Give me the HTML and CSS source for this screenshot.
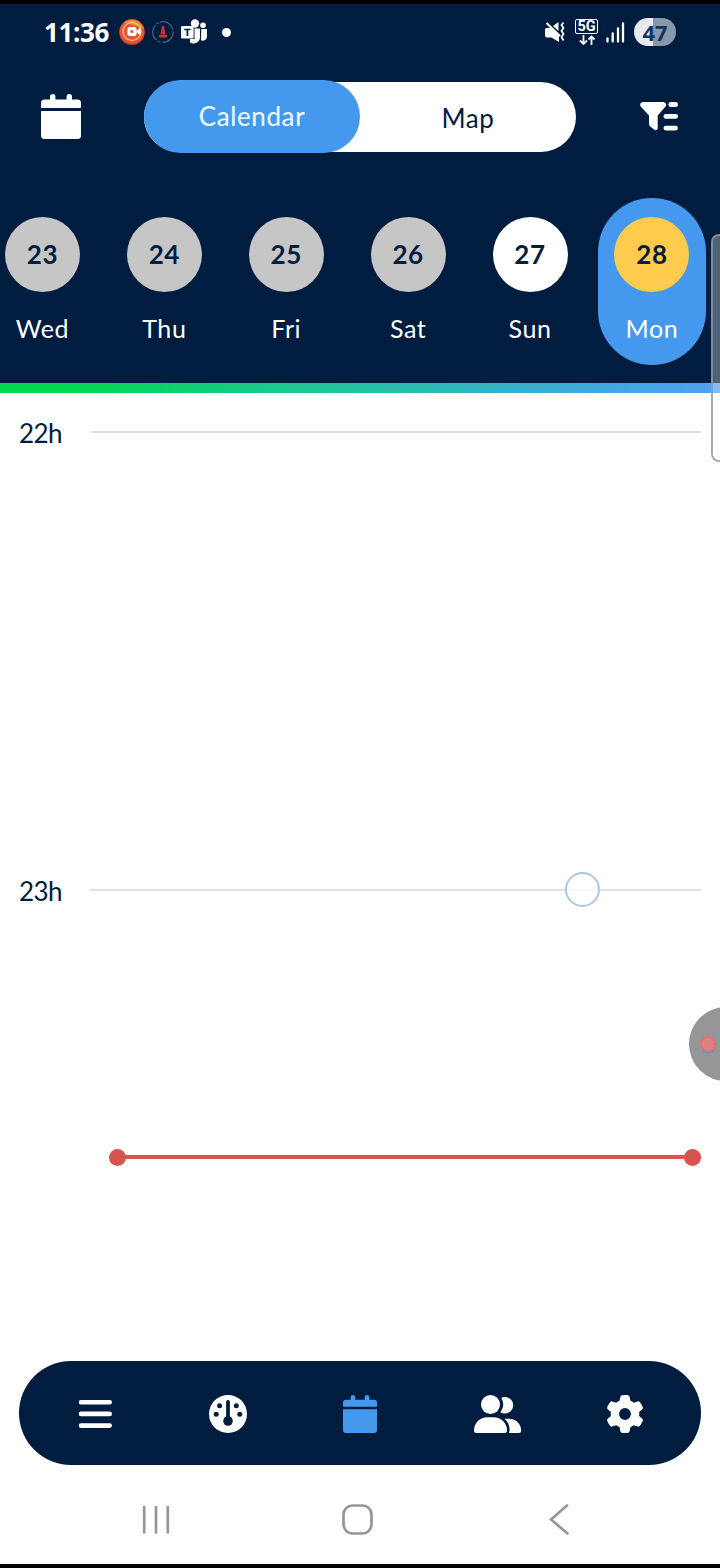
FILE: index.html
```html
<!DOCTYPE html>
<html lang="en">
<head>
<meta charset="utf-8">
<title>Calendar</title>
<link rel="stylesheet" href="styles.css">
</head>
<body>
<div class="screen">
  <header class="header">
    <div class="status">
      <span class="clock">11:36</span>
      <svg class="rec" width="26" height="28" viewBox="0 0 26 28"><circle cx="13" cy="14.5" r="12.8" fill="#a83428"/><circle cx="13" cy="13.5" r="12.5" fill="#e5533c"/><path d="M5 5A12.500 12.500 0 0 1 25 11L19 8Z" fill="#f0923c"/><circle cx="13" cy="13.500" r="9" fill="none" stroke="#f7cf6b" stroke-width="1.200"/><rect x="8.500" y="9" width="9" height="9" rx="2" fill="#fff"/><path d="M17 13L22 9.500V17.500L17 14Z" fill="#fff"/><circle cx="12.800" cy="13.500" r="1.600" fill="#e5533c"/></svg>
      <svg class="ring" width="22" height="24" viewBox="0 0 22 24"><circle cx="11" cy="12" r="10.300" fill="none" stroke="#4d6076" stroke-width="1.200" stroke-dasharray="17 1.500 3 1"/><path d="M10 6H12L13.500 14.500H8.500Z M7 15H15V17.500H7Z" fill="#d3302e"/></svg>
      <svg class="teams" width="27" height="26" viewBox="0 0 27 26"><g fill="#fff"><circle cx="14" cy="4.500" r="4.200"/><circle cx="22" cy="6.200" r="2.800"/><path d="M13.500 9.500H19V18.500A6.500 6.500 0 0 1 9 23.500V20H13.500Z"/><path d="M20.300 10H26V17.500A4.300 4.300 0 0 1 20 21.300Z"/><rect x="0" y="7" width="12.600" height="12.600" rx="1.400"/></g><path d="M3.300 10.500H9.500M6.400 10.500V17" stroke="#001d3f" stroke-width="1.700"/></svg>
      <span class="dot"></span>
      <span class="spacer"></span>
      <svg class="mute" width="20" height="22" viewBox="0 0 20 22"><path d="M0 8.500Q0 7 1.500 7H6L14 14V21L6.500 16.500H2Q0 16.500 0 14.500ZM8 5L13.500 1V10Z" fill="#fff"/><path d="M1.500 2L15 15" stroke="#fff" stroke-width="2"/><path d="M18.500 1.500L16.500 4L18.500 7L16.500 10L18.500 13L16.500 16L18.500 19.500" fill="none" stroke="#fff" stroke-width="1.700"/></svg>
      <div class="network"><span>5G</span><svg width="18" height="10" viewBox="0 0 18 10"><path d="M5.500 0V9M2 5.500L5.500 9L9 5.500M13.500 10V1.500M10.500 4.500L13.500 1.500L16.500 4.500" fill="none" stroke="#fff" stroke-width="1.800"/></svg></div>
      <svg class="signal" width="19" height="21" viewBox="0 0 19 21"><path d="M1.500 16.500V19.500M6.700 11.500V19.500M12 6.500V19.500M17 1.500V19.500" stroke="#fff" stroke-width="2.300" stroke-linecap="round"/></svg>
      <span class="battery">47</span>
    </div>
    <div class="toolbar">
      <svg width="40" height="45" viewBox="0 0 40 45"><path class="white" d="M0 14V9Q0 5.500 3.500 5.500H9V2.700A2.700 2.700 0 0 1 14.400 2.700V5.500H25.600V2.700A2.700 2.700 0 0 1 31 2.700V5.500H36.500Q40 5.500 40 9V14ZM0 17H40V41.500Q40 45 36.500 45H3.500Q0 45 0 41.500Z"/></svg>
      <div class="tabs"><span class="tab active">Calendar</span><span class="tab">Map</span></div>
      <svg width="38" height="29" viewBox="0 0 38 29"><path class="white" d="M2.500 0H23.500Q27.500 1.200 25.500 4.500L17.700 13.500V26.500Q17 28.800 14.800 28L10.500 24.800Q9 23.800 9 22V13.500L.7 4.500Q-1 1.200 2.500 0Z"/><g class="white"><rect x="28.500" y="0" width="9.500" height="5" rx="2.500"/><rect x="23.500" y="12" width="14.500" height="4.800" rx="2.400"/><rect x="23.500" y="23.700" width="14.500" height="4.800" rx="2.400"/></g></svg>
    </div>
    <div class="days">
      <div class="day past"><b>23</b><span>Wed</span></div>
      <div class="day past"><b>24</b><span>Thu</span></div>
      <div class="day past"><b>25</b><span>Fri</span></div>
      <div class="day past"><b>26</b><span>Sat</span></div>
      <div class="day"><b>27</b><span>Sun</span></div>
      <div class="day selected"><b>28</b><span>Mon</span></div>
    </div>
  </header>
  <div class="gradient"></div>
  <main class="timeline">
    <div class="hour"><span>22h</span><i></i></div>
    <div class="hour"><span>23h</span><i></i></div>
    <div class="touch"></div>
    <div class="now"></div>
  </main>
  <nav class="nav">
    <svg width="34" height="38" viewBox="0 0 34 38"><path d="M3 7.300H31.700M3 18.900H31.700M3 30.600H31.700" stroke="#fff" stroke-width="4.600" stroke-linecap="round"/></svg>
    <svg width="38" height="38" viewBox="0 0 38 38"><circle class="white" cx="19" cy="19" r="19"/><g fill="#001d3f"><circle cx="19" cy="26" r="4.800"/><rect x="17.100" y="5" width="3.800" height="20" rx="1.900"/><circle cx="10.600" cy="10.800" r="2.500"/><circle cx="27.300" cy="10.800" r="2.500"/><circle cx="7.200" cy="19.200" r="2.500"/><circle cx="30.800" cy="19.200" r="2.500"/></g></svg>
    <svg width="34" height="38" viewBox="0 0 40 45" preserveAspectRatio="none"><path fill="#4499ee" d="M0 14V9Q0 5.500 3.500 5.500H9V2.700A2.700 2.700 0 0 1 14.400 2.700V5.500H25.600V2.700A2.700 2.700 0 0 1 31 2.700V5.500H36.500Q40 5.500 40 9V14ZM0 17H40V41.500Q40 45 36.500 45H3.500Q0 45 0 41.500Z"/></svg>
    <svg width="48" height="38" viewBox="0 0 48 38"><g class="white"><circle cx="16.500" cy="9.500" r="9.500"/><path d="M27.300 2.700A8.300 8.300 0 1 1 26.400 17.200A13 13 0 0 0 27.300 2.700Z"/><path d="M0 35.500C0 28 6 22.300 13.300 22.300H19.700C27 22.300 33 28 33 35.500Q33 38 30.500 38H2.500Q0 38 0 35.500Z"/><path d="M30.500 23.800H35C42 23.800 47.200 29 47.200 35.700Q47.200 38 44.900 38H34.900Q35.600 36.500 35.600 34.800C35.600 30.300 33.700 26.500 30.500 23.800Z"/></g></svg>
    <svg class="gear" width="38" height="38" viewBox="0 0 512 512"><path class="white" d="M495.9 166.6c3.200 8.700 .5 18.400-6.400 24.600l-43.300 39.400c1.100 8.300 1.700 16.800 1.700 25.400s-.6 17.100-1.700 25.400l43.300 39.400c6.900 6.200 9.600 15.900 6.400 24.600c-4.400 11.900-9.700 23.300-15.800 34.300l-4.700 8.100c-6.600 11-14 21.400-22.100 31.200c-5.900 7.200-15.700 9.600-24.500 6.800l-55.700-17.700c-13.400 10.300-28.200 18.900-44 25.400l-12.500 57.100c-2 9.100-9 16.300-18.200 17.800c-13.800 2.300-28 3.500-42.500 3.500s-28.700-1.200-42.500-3.500c-9.200-1.500-16.200-8.700-18.200-17.800l-12.500-57.100c-15.800-6.500-30.600-15.100-44-25.400L83.100 425.900c-8.800 2.800-18.600 .3-24.500-6.800c-8.100-9.800-15.500-20.200-22.100-31.200l-4.700-8.100c-6.100-11-11.400-22.400-15.800-34.300c-3.200-8.700-.5-18.400 6.400-24.600l43.300-39.400C64.600 273.100 64 264.600 64 256s.6-17.100 1.700-25.400L22.400 191.200c-6.900-6.200-9.600-15.900-6.400-24.600c4.400-11.900 9.700-23.300 15.800-34.300l4.700-8.100c6.600-11 14-21.400 22.100-31.200c5.900-7.200 15.700-9.600 24.500-6.800l55.700 17.700c13.400-10.300 28.200-18.900 44-25.400l12.500-57.100c2-9.100 9-16.300 18.200-17.800C227.300 1.200 241.500 0 256 0s28.700 1.200 42.500 3.500c9.200 1.500 16.200 8.700 18.200 17.800l12.500 57.100c15.800 6.500 30.600 15.100 44 25.400l55.700-17.700c8.800-2.800 18.600-.3 24.500 6.800c8.100 9.800 15.500 20.200 22.100 31.200l4.700 8.100c6.100 11 11.400 22.400 15.800 34.300zM256 336a80 80 0 1 0 0-160 80 80 0 1 0 0 160z"/></svg>
  </nav>
  <footer class="system">
    <svg width="28" height="30" viewBox="0 0 28 30"><path d="M2.200 2V27.500M14 2V27.500M25.800 2V27.500"/></svg>
    <svg class="home" width="31" height="31" viewBox="0 0 31 31"><rect x="1.500" y="1.500" width="28" height="28" rx="9"/></svg>
    <svg width="20" height="31" viewBox="0 0 20 31"><path d="M18 1.500L2 15.500L18.500 29.500"/></svg>
  </footer>
  <div class="edge-panel"></div>
  <div class="bubble"><svg width="18" height="20" viewBox="0 0 18 20"><circle cx="9" cy="9" r="7.600" fill="#dc8085"/><circle cx="9" cy="9" r="7" fill="none" stroke="#ef6268" stroke-width="1.500" stroke-dasharray="2 1"/><path d="M4 16.500Q9 19.500 14.500 16" fill="none" stroke="#568fd5" stroke-width="1.300" stroke-dasharray="2 1"/></svg></div>
</div>
</body>
</html>
```
FILE: styles.css
```css
* { box-sizing: border-box; }
body { margin: 0; background: #fff; font-family: Lato, sans-serif; color: #001d3f; }
svg { display: block; flex: none; }
.white { fill: #fff; }
.screen { position: relative; width: 720px; height: 1568px; overflow: hidden; display: flex; flex-direction: column; border-top: 4px solid #000; border-bottom: 4px solid #000; background: #fff; }
.header { height: 379px; flex: none; background: #001d3f; }
.status { height: 56px; padding: 0 44px 0 44px; display: flex; align-items: center; }
.clock { width: 75px; font: 700 26px/30px "Open Sans", sans-serif; letter-spacing: -0.4px; color: #fff; white-space: nowrap; }
.ring { margin-left: 7px; }
.teams { margin-left: 7px; }
.dot { width: 9px; height: 9px; margin-left: 14px; border-radius: 50%; background: #fff; }
.spacer { flex: 1; }
.mute { margin-right: 10px; }
.network { width: 23px; height: 26px; margin-right: 8px; display: flex; flex-direction: column; align-items: center; gap: 1px; }
.network span { width: 23px; height: 15px; flex: none; border: 1px solid #fff; border-radius: 2px; font: 700 14.5px/13px Roboto, sans-serif; text-align: center; color: #fff; }
.signal { margin-right: 9px; }
.battery { width: 42px; height: 28px; border-radius: 14px; background: linear-gradient(90deg, #e8ecf2 46%, #8798aa 46%); font: 700 22px/28px "Open Sans", sans-serif; text-align: center; color: #12355b; }
.toolbar { height: 112px; padding: 1px 42px 0 41px; display: flex; align-items: center; justify-content: space-between; }
.tabs { width: 432px; height: 70px; margin-right: 1px; display: flex; align-items: center; border-radius: 35px; background: #fff; }
.tab { width: 216px; height: 73px; flex: none; padding-top: 2px; border-radius: 37px; font-size: 26px; line-height: 72px; letter-spacing: 0.6px; text-align: center; }
.tab.active { padding-top: 0; background: #4499ee; color: #f2ffff; }
.days { width: 732px; margin-left: -18.5px; padding-top: 26px; display: grid; grid-template-columns: repeat(6, 121.9px); justify-items: center; }
.day { width: 108px; height: 167px; padding-top: 19px; display: flex; flex-direction: column; align-items: center; border-radius: 54px; color: #fff; }
.day b { width: 75px; height: 75px; border-radius: 50%; background: #fff; color: #001d3f; font-size: 26px; line-height: 75px; letter-spacing: 0.6px; text-align: center; }
.day span { margin-top: 20px; font-size: 25px; line-height: 32px; letter-spacing: 0.6px; }
.past b { background: #c6c6c6; }
.selected { background: #4499ee; }
.selected b { background: #fecb4d; }
.gradient { height: 10px; flex: none; background: linear-gradient(90deg, #00d94d 8%, #20c39d 47%, #41a7e2 85%, #4f9ff2); }
.timeline { position: relative; height: 968px; flex: none; padding: 22px 19px 0; }
.hour { height: 457.5px; display: flex; align-items: flex-start; }
.hour span { width: 71px; font-size: 26px; line-height: 36px; letter-spacing: -0.6px; }
.hour i { flex: 1; height: 2px; margin-top: 16px; background: #e0e1e5; }
.touch { position: absolute; left: 565px; top: 479px; width: 35px; height: 35px; border: 2px solid #aac7e5; border-radius: 50%; background: rgba(255,255,255,.75); }
.now { position: absolute; left: 109px; right: 19px; top: 762px; height: 4px; background: #db554e; }
.now::before, .now::after { content: ""; position: absolute; top: -6.5px; width: 17px; height: 17px; border-radius: 50%; background: #d9534e; }
.now::before { left: 0; }
.now::after { right: 0; }
.nav { height: 104px; flex: none; margin: 0 19px; padding: 2px 57px 0 59px; display: flex; align-items: center; gap: 96.5px; border-radius: 52px; background: #001d3f; }
.gear { margin-left: -12px; }
.system { flex: 1; padding: 10px 151px 0 142px; display: flex; align-items: center; justify-content: space-between; }
.home { margin-right: 4px; }
.system svg { fill: none; stroke: #969696; stroke-width: 2.7px; stroke-linecap: round; }
.edge-panel { position: absolute; left: 711px; top: 230px; width: 30px; height: 228px; border: 2px solid rgba(145,150,158,.8); border-radius: 8px; background: rgba(255,255,255,.3); }
.bubble { position: absolute; left: 689px; top: 1003px; width: 74px; height: 74px; padding: 28px 0 0 10px; border-radius: 50%; background: #969698; }
```
